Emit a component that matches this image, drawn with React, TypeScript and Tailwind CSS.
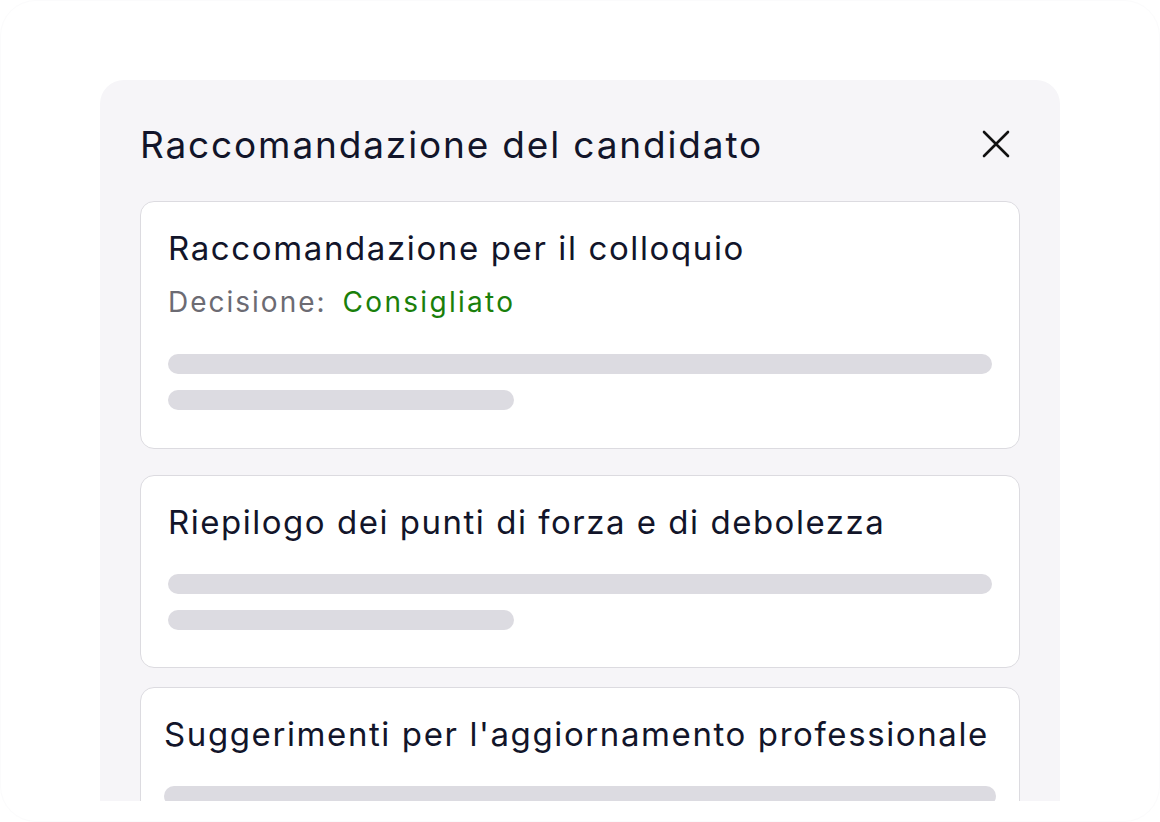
function Bars() {
    return (
        <div className="flex flex-col gap-4">
            <div className="h-5 w-full rounded-full bg-[#dcdbe1]" />
            <div className="h-5 w-[346px] rounded-full bg-[#dcdbe1]" />
        </div>
    );
}

function CloseIcon() {
    return (
        <svg width="28" height="28" viewBox="0 0 28 28" fill="none" className="mr-[10px] mt-[-2px]">
            <path d="M2 2L26 26M26 2L2 26" stroke="#111111" strokeWidth="2.6" strokeLinecap="round" />
        </svg>
    );
}

export default function App() {
    return (
        <div
            className="h-[822px] w-[1160px] overflow-hidden bg-white"
            style={{ fontFamily: 'Inter, "Noto Sans", sans-serif' }}
        >
            <div className="h-full w-full overflow-hidden rounded-[36px] border border-[#fbfbfc] bg-white px-[99px] pt-[79px]">
                <div className="h-[721px] overflow-hidden rounded-t-[24px] bg-[#f6f5f8] px-10">
                    {/* Header */}
                    <div className="flex items-center justify-between pb-[34px] pt-[43px]">
                        <h1 className="text-[37px] leading-[44px] tracking-[1.85px] text-[#12152a]">
                            Raccomandazione del candidato
                        </h1>
                        <CloseIcon />
                    </div>

                    {/* Interview recommendation */}
                    <div className="rounded-[14px] border border-[#dcdbe0] bg-white px-[27px] pb-[38px] pt-[27px]">
                        <h2 className="text-[33px] leading-[38px] tracking-[1.62px] text-[#12152a]">
                            Raccomandazione per il colloquio
                        </h2>
                        <p className="mt-[17px] text-[28px] leading-[36px]">
                            <span className="tracking-[2px] text-[#6c6b73]">Decisione:</span>
                            <span className="ml-[16px] tracking-[2.3px] text-[#1a7f0b]">Consigliato</span>
                        </p>
                        <div className="mt-[34px]">
                            <Bars />
                        </div>
                    </div>

                    {/* Strengths and weaknesses */}
                    <div className="mt-[26px] rounded-[14px] border border-[#dcdbe0] bg-white px-[27px] pb-[37px] pt-[27px]">
                        <h2 className="text-[33px] leading-[38px] tracking-[1.52px] text-[#12152a]">
                            Riepilogo dei punti di forza e di debolezza
                        </h2>
                        <div className="mt-[33px]">
                            <Bars />
                        </div>
                    </div>

                    {/* Development suggestions */}
                    <div className="mt-[19px] rounded-[14px] border border-[#dcdbe0] bg-white px-[23px] pb-[37px] pt-[27px]">
                        <h2 className="text-[33px] leading-[38px] tracking-[1.6px] text-[#12152a]">
                            Suggerimenti per l'aggiornamento professionale
                        </h2>
                        <div className="mt-[33px]">
                            <div className="h-5 w-full rounded-full bg-[#dcdbe1]" />
                        </div>
                    </div>
                </div>
            </div>
        </div>
    );
}
